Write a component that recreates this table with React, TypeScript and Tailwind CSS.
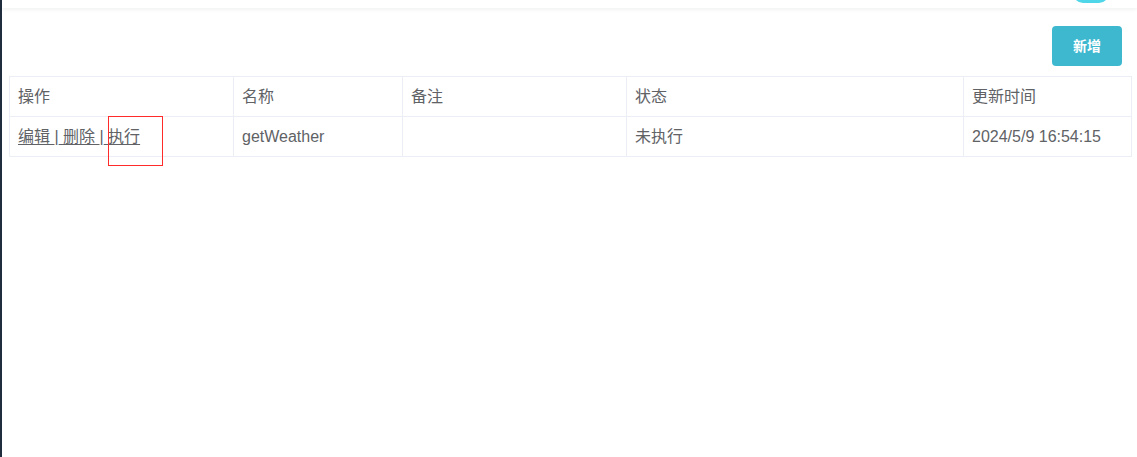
const cols = [224, 169, 224, 337, 168];

const headers = ["操作", "名称", "备注", "状态", "更新时间"];

function ActionLinks() {
  return (
    <span className="whitespace-nowrap">
      <a className="cursor-pointer underline underline-offset-2">编辑 </a>|
      <a className="cursor-pointer underline underline-offset-2"> 删除 </a>|
      <a className="cursor-pointer underline underline-offset-2"> 执行</a>
    </span>
  );
}

export default function App() {
  return (
    <div
      className="relative flex h-[457px] w-[1137px] overflow-hidden bg-white text-[#606266]"
      style={{ fontFamily: '"Liberation Sans", "Noto Sans CJK SC", sans-serif' }}
    >
      <div className="w-[2px] flex-none bg-[#1f2d3d]" />
      <div className="flex min-w-0 flex-1 flex-col">
        {/* top bar */}
        <div className="relative z-10 flex h-[8px] flex-none justify-end overflow-hidden bg-white shadow-[0_1px_4px_rgba(0,21,41,0.08)]">
          <div className="mr-[28px] -mt-[17px] h-[20px] w-[36px] rounded-full bg-[#4fd6e8]" />
        </div>

        <div className="flex flex-col pl-[7px] pr-[6px] pt-[18px]">
          <div className="flex justify-end pr-[9px]">
            <button
              type="button"
              className="h-[40px] w-[70px] rounded-[4px] bg-[#3eb8cf] text-[14px] font-bold text-white"
            >
              新增
            </button>
          </div>

          <table className="mt-[10px] w-[1122px] table-fixed border-collapse text-[16px]">
            <colgroup>
              {cols.map((w, i) => (
                <col key={i} style={{ width: w }} />
              ))}
            </colgroup>
            <thead>
              <tr className="h-[40px]">
                {headers.map((h) => (
                  <th
                    key={h}
                    className="border border-[#ebeef5] px-[8px] text-left font-normal"
                  >
                    {h}
                  </th>
                ))}
              </tr>
            </thead>
            <tbody>
              <tr className="h-[40px]">
                <td className="border border-[#ebeef5] px-[8px]">
                  <ActionLinks />
                </td>
                <td className="border border-[#ebeef5] px-[8px]">getWeather</td>
                <td className="border border-[#ebeef5] px-[8px]"></td>
                <td className="border border-[#ebeef5] px-[8px]">未执行</td>
                <td className="border border-[#ebeef5] px-[8px]">2024/5/9 16:54:15</td>
              </tr>
            </tbody>
          </table>
        </div>
      </div>

      {/* annotation box */}
      <div className="pointer-events-none absolute left-[108px] top-[116px] h-[50px] w-[55px] border border-[#ff2a2a]" />
    </div>
  );
}
